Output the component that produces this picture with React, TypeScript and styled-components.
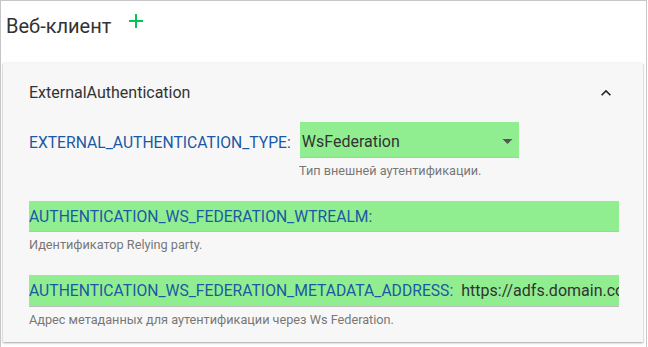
import React from "react";
import styled, { createGlobalStyle } from "styled-components";

const Global = createGlobalStyle`
  html, body { margin: 0; padding: 0; background: #fff; }
  body { font-family: Roboto, "Liberation Sans", Arial, sans-serif; }
  * { box-sizing: border-box; }
`;

const Frame = styled.div`
  width: 647px;
  height: 347px;
  border: 1px solid #c6c6c6;
  border-bottom: none;
  overflow: hidden;
  background: #fff;
`;

const TitleBar = styled.div`
  display: flex;
  align-items: flex-start;
  height: 62px;
  padding: 11px 0 0 5px;
`;

const Title = styled.h1`
  margin: 0;
  font-size: 20px;
  font-weight: 400;
  color: #333;
  line-height: 28px;
`;

const AddButton = styled.button`
  border: none;
  background: none;
  padding: 0;
  margin: 1px 0 0 17px;
  width: 16px;
  height: 16px;
  display: flex;
  color: #00c853;
`;

const Card = styled.section`
  margin: 0 3px 0 2px;
  background: #f7f7f7;
  box-shadow: 0 1px 2px rgba(0, 0, 0, 0.35), 0 0 1px rgba(0, 0, 0, 0.12);
  padding: 0 24px 15px 26px;
`;

const CardHeader = styled.div`
  display: flex;
  align-items: center;
  justify-content: space-between;
  height: 59px;
`;

const CardTitle = styled.h2`
  margin: 0;
  font-size: 16px;
  font-weight: 400;
  color: #333;
`;

const Chevron = styled.span`
  display: flex;
  color: #222;
  margin-right: 3px;
`;

const Field = styled.div<{ $gap: number }>`
  margin-bottom: ${(p) => p.$gap}px;
`;

const InlineRow = styled.div`
  display: flex;
  align-items: center;
  gap: 9px;
`;

const Label = styled.span<{ $shift?: number }>`
  font-size: 15.7px;
  color: #1c58a4;
  white-space: nowrap;
  margin-top: ${(p) => p.$shift ?? 0}px;
`;

const Select = styled.div`
  display: flex;
  align-items: center;
  justify-content: space-between;
  width: 219px;
  height: 36px;
  background: #90ee90;
  border-bottom: 1px solid #bdbdbd;
  padding: 3px 6px 0 2px;
  font-size: 16px;
  color: #333;
`;

const Arrow = styled.span`
  display: flex;
  color: #555;
  margin-top: 2px;
`;

const GreenRow = styled.div<{ $h: number }>`
  display: flex;
  align-items: center;
  gap: 8px;
  height: ${(p) => p.$h}px;
  background: #90ee90;
  border-bottom: 1px solid #bdbdbd;
  overflow: hidden;
  white-space: nowrap;
`;

const Value = styled.span`
  font-size: 16px;
  color: #333;
  overflow: hidden;
`;

const Help = styled.div<{ $indent?: number }>`
  font-size: 12.7px;
  line-height: 15px;
  color: #777;
  margin-top: 5px;
  padding-left: ${(p) => p.$indent ?? 0}px;
`;

export default function App() {
  return (
    <>
      <Global />
      <Frame>
        <TitleBar>
          <Title>Веб-клиент</Title>
          <AddButton aria-label="add">
            <svg width="16" height="16" viewBox="0 0 16 16">
              <path d="M8 1v14M1 8h14" stroke="currentColor" strokeWidth="2" fill="none" />
            </svg>
          </AddButton>
        </TitleBar>
        <Card>
          <CardHeader>
            <CardTitle>ExternalAuthentication</CardTitle>
            <Chevron>
              <svg width="20" height="20" viewBox="0 0 24 24">
                <path d="M12 8l-6 6 1.41 1.41L12 10.83l4.59 4.58L18 14z" fill="currentColor" />
              </svg>
            </Chevron>
          </CardHeader>
          <Field $gap={23}>
            <InlineRow>
              <Label $shift={5}>EXTERNAL_AUTHENTICATION_TYPE:</Label>
              <Select>
                <span>WsFederation</span>
                <Arrow>
                  <svg width="11" height="6" viewBox="0 0 11 6">
                    <path d="M0.5 0h10L5.5 5z" fill="currentColor" />
                  </svg>
                </Arrow>
              </Select>
            </InlineRow>
            <Help $indent={270}>Тип внешней аутентификации.</Help>
          </Field>
          <Field $gap={23}>
            <GreenRow $h={31}>
              <Label>AUTHENTICATION_WS_FEDERATION_WTREALM:</Label>
            </GreenRow>
            <Help>Идентификатор Relying party.</Help>
          </Field>
          <Field $gap={0}>
            <GreenRow $h={32}>
              <Label>AUTHENTICATION_WS_FEDERATION_METADATA_ADDRESS:</Label>
              <Value>https://adfs.domain.com</Value>
            </GreenRow>
            <Help>Адрес метаданных для аутентификации через Ws Federation.</Help>
          </Field>
        </Card>
      </Frame>
    </>
  );
}
